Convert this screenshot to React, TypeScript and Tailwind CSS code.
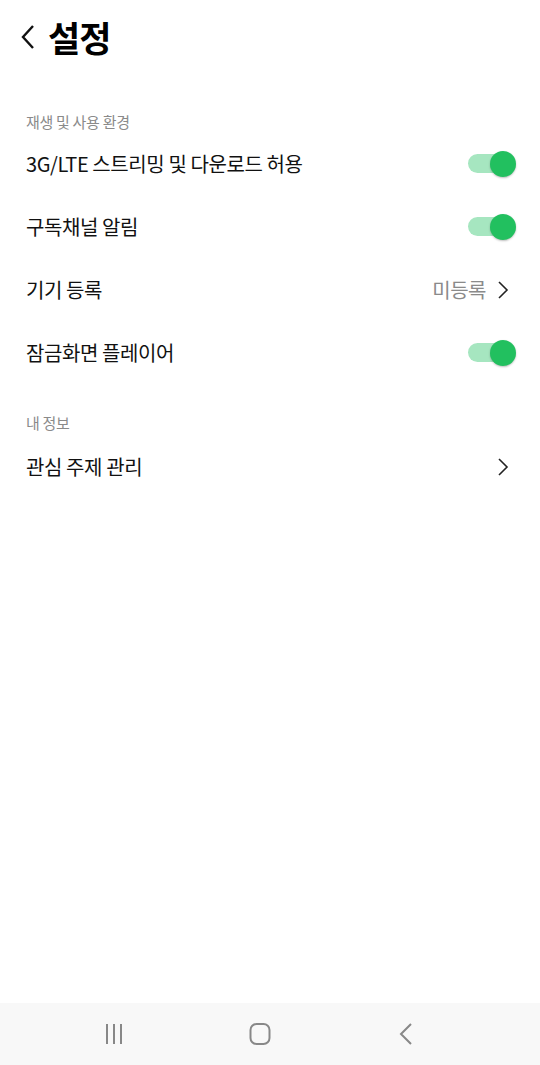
const font = { fontFamily: '"Noto Sans CJK KR", "Noto Sans", sans-serif' };

const Toggle = () => (
  <div className="relative w-[48px] h-[28px] flex items-center">
    <div className="w-[44px] h-[19px] rounded-full bg-[#a6e6c0]" />
    <div className="absolute right-0 top-[1px] w-[26px] h-[26px] rounded-full bg-[#22c05f] shadow-[0_1px_2px_rgba(0,0,0,0.25)]" />
  </div>
);

const Chevron = () => (
  <svg width="14" height="20" viewBox="0 0 14 20" fill="none">
    <path d="M3 2 L11 10 L3 18" stroke="#222" strokeWidth="1.6" />
  </svg>
);

const Row = ({ label, right }: { label: string; right: React.ReactNode }) => (
  <div className="flex items-center justify-between h-[63px] pl-[26px] pr-[24px]">
    <span className="text-[20px] text-[#111] tracking-[-0.4px]">{label}</span>
    {right}
  </div>
);

const Section = ({ title }: { title: string }) => (
  <div className="pl-[26px] text-[15px] text-[#8a8a8a] tracking-[-0.3px]">{title}</div>
);

export default function App() {
  return (
    <div className="w-[540px] h-[1065px] bg-white flex flex-col" style={font}>
      <div className="flex items-center h-[74px] pl-[18px] gap-[10px]">
        <svg width="20" height="30" viewBox="0 0 20 30" fill="none">
          <path d="M15 4 L5 15 L15 26" stroke="#111" strokeWidth="2.4" />
        </svg>
        <span className="text-[35px] font-bold text-black tracking-[-1px]">설정</span>
      </div>

      <div className="flex-1 flex flex-col">
        <div className="h-[36px] mt-[30px] flex items-center">
          <Section title="재생 및 사용 환경" />
        </div>
        <div className="-mt-[8px]">
          <Row label="3G/LTE 스트리밍 및 다운로드 허용" right={<Toggle />} />
          <Row label="구독채널 알림" right={<Toggle />} />
          <Row
            label="기기 등록"
            right={
              <div className="flex items-center gap-[10px] pr-[6px]">
                <span className="text-[20px] text-[#8a8a8a] tracking-[-0.5px]">미등록</span>
                <Chevron />
              </div>
            }
          />
          <Row label="잠금화면 플레이어" right={<Toggle />} />
        </div>
        <div className="h-[36px] mt-[21px] flex items-center">
          <Section title="내 정보" />
        </div>
        <div className="-mt-[6px]">
          <Row
            label="관심 주제 관리"
            right={
              <div className="pr-[6px]">
                <Chevron />
              </div>
            }
          />
        </div>
      </div>

      <div className="h-[62px] bg-[#f8f8f8] flex items-center pl-[102px] gap-[122px]">
        <svg width="24" height="24" viewBox="0 0 24 24" fill="none">
          <path d="M5 2 V22 M12 2 V22 M19 2 V22" stroke="#888" strokeWidth="2" />
        </svg>
        <svg width="24" height="24" viewBox="0 0 24 24" fill="none">
          <rect x="2.5" y="2" width="19" height="20" rx="6" stroke="#888" strokeWidth="2" />
        </svg>
        <svg width="24" height="24" viewBox="0 0 24 24" fill="none">
          <path d="M17 2 L7 12 L17 22" stroke="#888" strokeWidth="2" />
        </svg>
      </div>
    </div>
  );
}
